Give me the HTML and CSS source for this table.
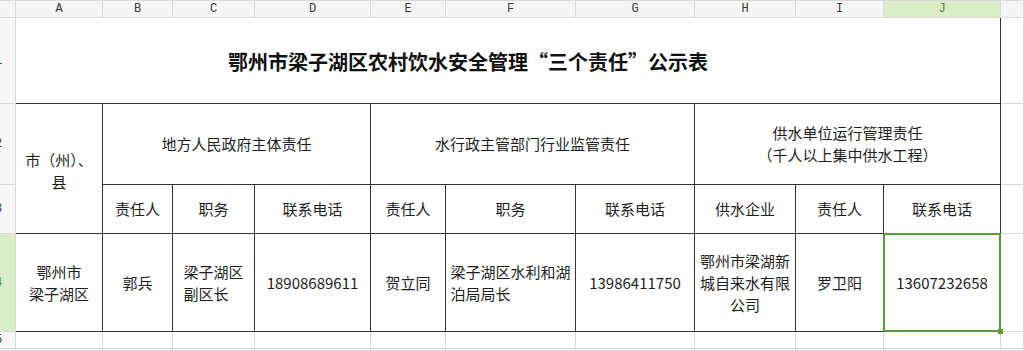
FILE: index.html
```html
<!DOCTYPE html>
<html lang="zh-CN">
<head>
<meta charset="utf-8">
<title>鄂州市梁子湖区农村饮水安全管理“三个责任”公示表</title>
<link rel="stylesheet" href="styles.css">
</head>
<body>
<div class="sheet">
  <!-- column headers -->
  <div class="ch corner"></div>
  <div class="ch">A</div>
  <div class="ch">B</div>
  <div class="ch">C</div>
  <div class="ch">D</div>
  <div class="ch">E</div>
  <div class="ch">F</div>
  <div class="ch">G</div>
  <div class="ch">H</div>
  <div class="ch">I</div>
  <div class="ch ch-sel">J</div>
  <div class="ch"></div>

  <!-- row 1 -->
  <div class="rh"><span>1</span></div>
  <div class="c title span10">鄂州市梁子湖区农村饮水安全管理“三个责任”公示表</div>
  <div class="g"></div>

  <!-- row 2 -->
  <div class="rh"><span>2</span></div>
  <div class="c rows2">市（州）、<br>县</div>
  <div class="c span3">地方人民政府主体责任</div>
  <div class="c span3">水行政主管部门行业监管责任</div>
  <div class="c span3">供水单位运行管理责任<br>（千人以上集中供水工程）</div>
  <div class="g"></div>

  <!-- row 3 -->
  <div class="rh"><span>3</span></div>
  <div class="c">责任人</div>
  <div class="c">职务</div>
  <div class="c">联系电话</div>
  <div class="c">责任人</div>
  <div class="c">职务</div>
  <div class="c">联系电话</div>
  <div class="c">供水企业</div>
  <div class="c">责任人</div>
  <div class="c">联系电话</div>
  <div class="g"></div>

  <!-- row 4 -->
  <div class="rh rh-sel"><span>4</span></div>
  <div class="c">鄂州市<br>梁子湖区</div>
  <div class="c">郭兵</div>
  <div class="c"><span class="wrap">梁子湖区<br>副区长</span></div>
  <div class="c">18908689611</div>
  <div class="c">贺立同</div>
  <div class="c"><span class="wrap">梁子湖区水利和湖<br>泊局局长</span></div>
  <div class="c">13986411750</div>
  <div class="c">鄂州市梁湖新<br>城自来水有限<br>公司</div>
  <div class="c">罗卫阳</div>
  <div class="c active">13607232658<div class="sel"><div class="handle"></div></div></div>
  <div class="g"></div>

  <!-- row 5 -->
  <div class="rh"><span>5</span></div>
  <div class="g"></div><div class="g"></div><div class="g"></div><div class="g"></div><div class="g"></div>
  <div class="g"></div><div class="g"></div><div class="g"></div><div class="g"></div><div class="g"></div>
  <div class="g"></div>

  <!-- row 6 -->
  <div class="rh"></div>
  <div class="g"></div><div class="g"></div><div class="g"></div><div class="g"></div><div class="g"></div>
  <div class="g"></div><div class="g"></div><div class="g"></div><div class="g"></div><div class="g"></div>
  <div class="g"></div>
</div>
</body>
</html>
```

FILE: styles.css
```css
html, body {
  margin: 0;
  padding: 0;
  background: #ffffff;
}

body {
  font-family: "Noto Sans CJK SC", "Microsoft YaHei", sans-serif;
  color: #1e1e1e;
}

.sheet {
  width: 1024px;
  height: 351px;
  overflow: hidden;
  display: grid;
  grid-template-columns: 16px 87px 70px 82px 116px 75px 130px 119px 101px 88px 117px 1fr;
  grid-template-rows: 18px 86px 81px 49px 98px 17px 1fr;
}

.sheet > div {
  box-sizing: border-box;
  border-right: 1px solid #d9d9d9;
  border-bottom: 1px solid #d9d9d9;
  min-width: 0;
  min-height: 0;
}

/* column headers */
.ch {
  background: #f5f5f5;
  border-top: 1px solid #d9d9d9;
  font-family: "Liberation Mono", "DejaVu Sans Mono", monospace;
  font-size: 12px;
  color: #3a3a3a;
  display: flex;
  align-items: center;
  justify-content: center;
  line-height: 1;
}

.ch.ch-sel {
  background: #d8edc8;
  color: #3d8f1f;
}

/* row headers */
.rh {
  background: #f7f7f7;
  overflow: hidden;
  display: flex;
  align-items: center;
  font-family: "Liberation Mono", "DejaVu Sans Mono", monospace;
  font-size: 12px;
  color: #3a3a3a;
}

.rh span {
  margin-left: -5px;
}

.rh.rh-sel {
  background: #d8edc8;
  color: #3d8f1f;
}

/* table cells */
.sheet > .c {
  border-right: 1px solid #333333;
  border-bottom: 1px solid #333333;
  display: flex;
  align-items: center;
  justify-content: center;
  text-align: center;
  font-size: 15px;
  line-height: 22px;
}

.span10 { grid-column: span 10; }
.span3 { grid-column: span 3; }
.sheet > .rows2 { grid-row: span 2; padding-top: 4px; }

.sheet > .title {
  font-size: 20px;
  font-weight: 700;
  color: #111111;
  padding-right: 80px;
  padding-top: 3px;
}

.wrap {
  display: inline-block;
  text-align: left;
}

.active {
  position: relative;
}

.sel {
  position: absolute;
  left: -1px;
  top: -1px;
  width: 118px;
  height: 99px;
  box-sizing: border-box;
  border: 2px solid #5a9a37;
}

.handle {
  position: absolute;
  right: -4px;
  bottom: -4px;
  width: 5px;
  height: 5px;
  background: #5a9a37;
}
```
